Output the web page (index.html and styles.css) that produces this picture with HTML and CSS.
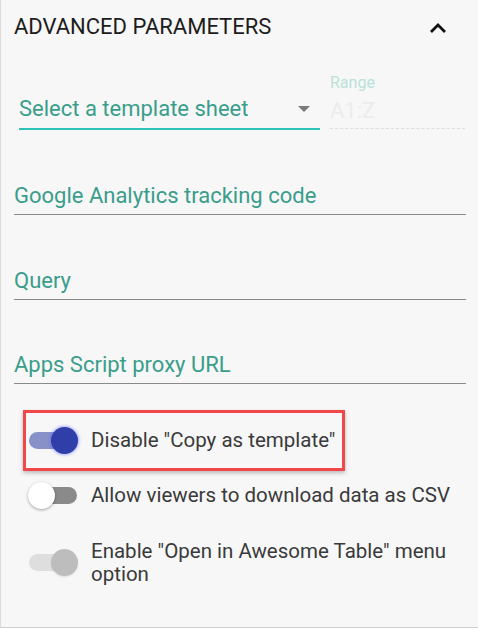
FILE: index.html
```html
<!DOCTYPE html>
<html>
<head>
<meta charset="utf-8">
<link rel="stylesheet" href="styles.css">
</head>
<body>
<div class="panel">
  <div class="header">
    <span class="title">ADVANCED PARAMETERS</span>
    <svg class="chevron" width="18" height="12" viewBox="0 0 18 12"><polyline points="2,10 9,3 16,10" fill="none" stroke="#111" stroke-width="2.8"/></svg>
  </div>
  <div class="select-row">
    <div class="select">
      <span class="select-text">Select a template sheet</span>
      <span class="arrow"></span>
    </div>
    <div class="range">
      <div class="range-label">Range</div>
      <div class="range-value">A1:Z</div>
    </div>
  </div>
  <div class="field first">Google Analytics tracking code</div>
  <div class="field">Query</div>
  <div class="field">Apps Script proxy URL</div>
  <div class="toggles">
    <div class="row highlight">
      <span class="toggle on"><span class="track"></span><span class="thumb"></span></span>
      <span class="label">Disable "Copy as template"</span>
    </div>
    <div class="row row2">
      <span class="toggle off"><span class="track"></span><span class="thumb"></span></span>
      <span class="label">Allow viewers to download data as CSV</span>
    </div>
    <div class="row row3">
      <span class="toggle disabled"><span class="track"></span><span class="thumb"></span></span>
      <span class="label">Enable "Open in Awesome Table" menu<br>option</span>
    </div>
  </div>
</div>
</body>
</html>
```
FILE: styles.css
```css
html, body {
  margin: 0;
  padding: 0;
  background: #ffffff;
}
body {
  font-family: Roboto, "Liberation Sans", sans-serif;
}
.panel {
  width: 478px;
  height: 628px;
  box-sizing: border-box;
  background: #f7f7f7;
  border-left: 1px solid #dcdcdc;
  border-bottom: 1px solid #cfcfcf;
  overflow: hidden;
}
.header {
  display: flex;
  justify-content: space-between;
  align-items: flex-start;
  padding: 14px 31px 0 13px;
  height: 50px;
  box-sizing: border-box;
}
.title {
  font-size: 22px;
  line-height: 26px;
  color: #1c1c1c;
}
.chevron {
  margin-top: 8px;
}
.select-row {
  display: flex;
  margin-top: 24px;
  padding-left: 18px;
  gap: 10px;
}
.select {
  width: 301px;
  box-sizing: border-box;
  padding-top: 20.5px;
  padding-bottom: 5.5px;
  border-bottom: 2px solid #2cc3b4;
  display: flex;
  align-items: center;
  justify-content: space-between;
}
.select-text {
  font-size: 22px;
  line-height: 26px;
  color: #3a9d8b;
}
.arrow {
  width: 0;
  height: 0;
  border-left: 6.5px solid transparent;
  border-right: 6.5px solid transparent;
  border-top: 6px solid #7a7a7a;
  margin-right: 10px;
  margin-top: 0;
}
.range {
  width: 135px;
  border-bottom: 1px dashed #dedede;
  margin-bottom: 1px;
}
.range-label {
  font-size: 16px;
  line-height: 18px;
  color: #b9e2da;
}
.range-value {
  font-size: 22px;
  line-height: 26px;
  margin-top: 5.5px;
  padding-bottom: 4.5px;
  color: #ececec;
}
.field {
  margin: 52.5px 12px 0 13px;
  font-size: 22px;
  line-height: 26px;
  color: #3a9d8b;
  padding-bottom: 5px;
  border-bottom: 1.5px solid #8a8a8a;
}
.field.first {
  margin-top: 53px;
}
.toggles {
  margin-top: 25.5px;
  padding-left: 22px;
  display: flex;
  flex-direction: column;
  align-items: flex-start;
}
.row {
  display: flex;
  align-items: center;
  padding-left: 6px;
}
.row.highlight {
  border: 3px solid #f0474b;
  padding: 0 7px 0 3px;
  height: 55px;
  box-shadow: 0 2px 4px rgba(0,0,0,0.25);
}
.row2 {
  height: 50px;
}
.row3 {
  padding-top: 19px;
}
.label {
  font-size: 20.5px;
  line-height: 23px;
  color: #3a3a3a;
  margin-left: 13px;
}
.toggle {
  position: relative;
  width: 49px;
  height: 27px;
  flex: none;
}
.track {
  position: absolute;
  left: 0;
  right: 1px;
  top: 5px;
  height: 17px;
  border-radius: 9px;
}
.thumb {
  position: absolute;
  top: 0;
  width: 27px;
  height: 27px;
  border-radius: 50%;
}
.on .track { background: #8891c8; }
.on .thumb {
  right: 0;
  background: #2f3ea8;
  box-shadow: 0 0 3px 1px rgba(70,90,255,0.45);
}
.off .track { background: #8a8a8a; }
.off .thumb {
  left: -1px;
  background: #ffffff;
  box-shadow: 0 1px 3px rgba(0,0,0,0.35);
}
.disabled .track { background: #dedede; }
.disabled .thumb {
  right: 0;
  background: #bdbdbd;
  box-shadow: 0 1px 2px rgba(0,0,0,0.1);
}
```
